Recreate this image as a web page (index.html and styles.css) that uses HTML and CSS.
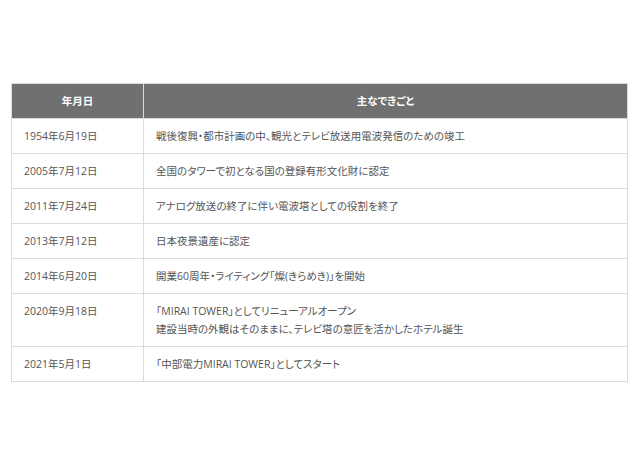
FILE: index.html
```html
<!DOCTYPE html>
<html lang="ja">
<head>
<meta charset="utf-8">
<link rel="stylesheet" href="styles.css">
</head>
<body>
<div class="page">
<table class="history">
<colgroup><col class="c-date"><col class="c-event"></colgroup>
<thead>
<tr><th>年月日</th><th>主なできごと</th></tr>
</thead>
<tbody>
<tr><td>1954年6月19日</td><td>戦後復興・都市計画の中、観光とテレビ放送用電波発信のための竣工</td></tr>
<tr><td>2005年7月12日</td><td>全国のタワーで初となる国の登録有形文化財に認定</td></tr>
<tr><td>2011年7月24日</td><td>アナログ放送の終了に伴い電波塔としての役割を終了</td></tr>
<tr><td>2013年7月12日</td><td>日本夜景遺産に認定</td></tr>
<tr><td>2014年6月20日</td><td>開業60周年・ライティング「燦(きらめき)」を開始</td></tr>
<tr><td>2020年9月18日</td><td>「MIRAI TOWER」としてリニューアルオープン<br>建設当時の外観はそのままに、テレビ塔の意匠を活かしたホテル誕生</td></tr>
<tr><td>2021年5月1日</td><td>「中部電力MIRAI TOWER」としてスタート</td></tr>
</tbody>
</table>
</div>
</body>
</html>
```
FILE: styles.css
```css
html, body {
  margin: 0;
  padding: 0;
  background: #fff;
}
.page {
  padding: 83px 12px 0 11px;
  font-family: "Open Sans", "Noto Sans CJK JP", sans-serif;
  font-size: 10.5px;
  color: #555;
  font-feature-settings: "palt";
}
.history {
  width: 617px;
  border-collapse: collapse;
  border: 1px solid #dcdcdc;
}
.c-date { width: 132px; }
.history th {
  background: #707070;
  color: #fff;
  font-weight: bold;
  text-align: center;
  padding: 8px 12px;
  line-height: 18px;
  border: 1px solid #dcdcdc;
  border-top: 0;
}
.history td {
  padding: 8px 12px;
  line-height: 18px;
  text-align: left;
  vertical-align: top;
  border: 1px solid #dcdcdc;
}
```
